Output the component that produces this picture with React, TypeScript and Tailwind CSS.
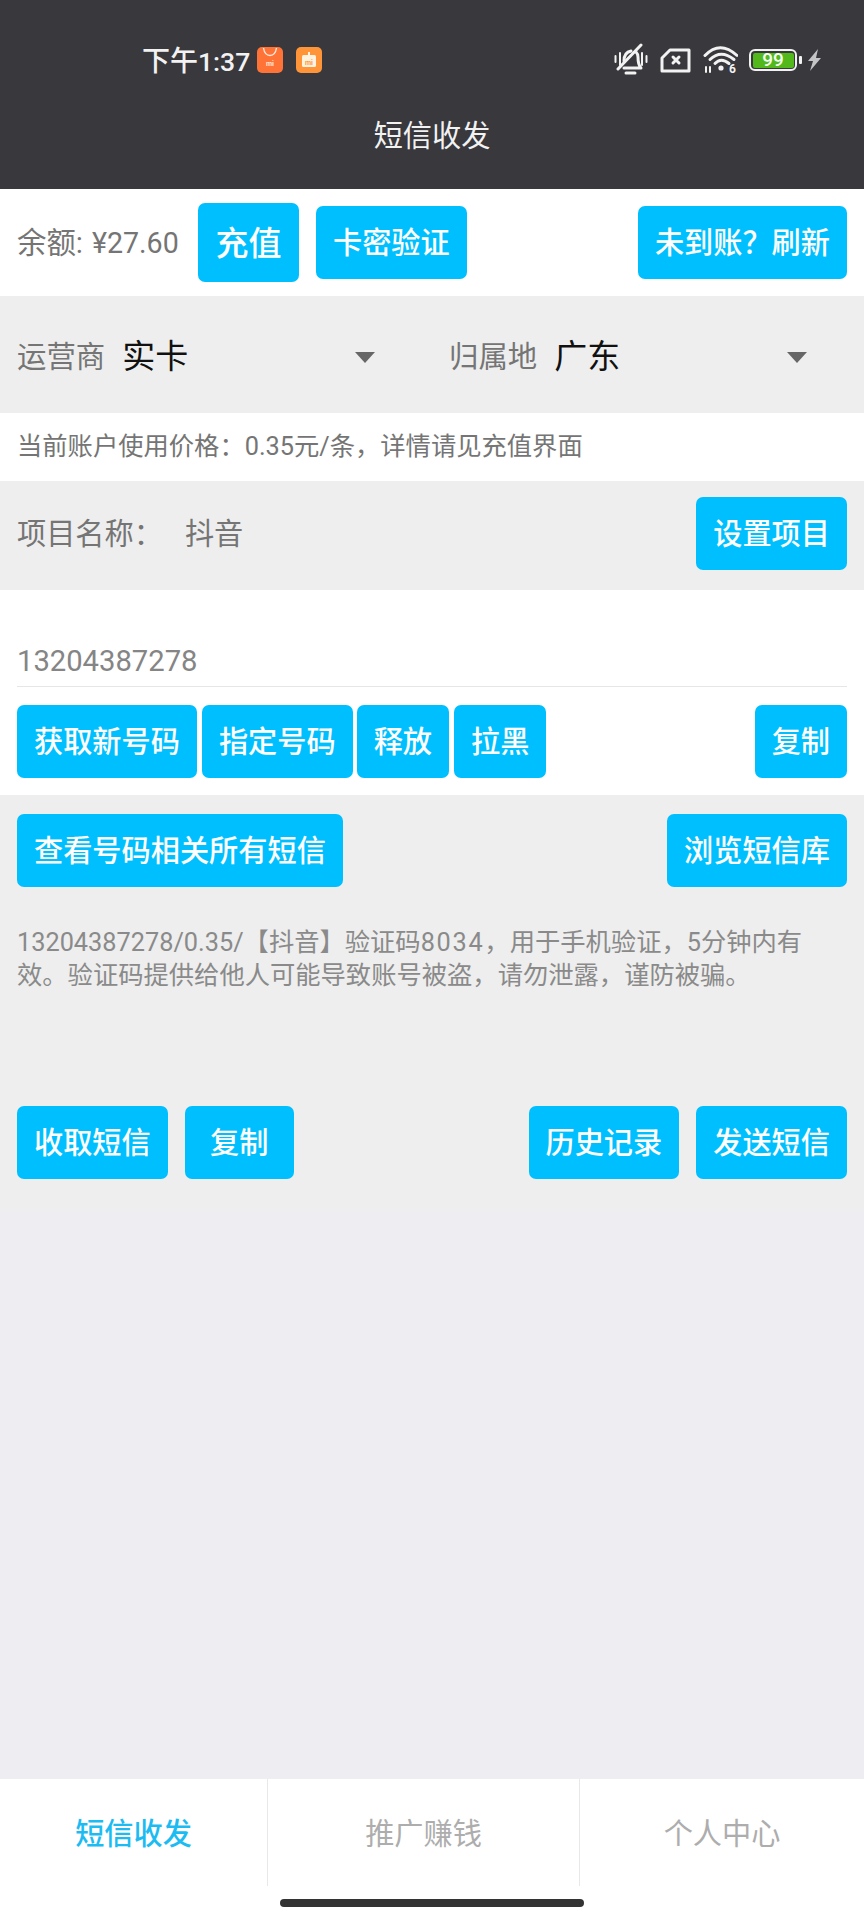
import React from 'react';

const FONT = "font-['Roboto','Noto_Sans_CJK_SC',sans-serif]";

const Btn: React.FC<{ label: string; className?: string }> = ({ label, className = '' }) => (
  <button className={`h-[73px] px-[17px] pt-[2px] rounded-[7px] bg-[#00bfff] text-white text-[29.2px] font-medium whitespace-nowrap flex items-center justify-center ${className}`}>
    {label}
  </button>
);

const StatusIcons = () => (
  <div className="flex items-center">
    {/* muted bell */}
    <svg width="34" height="34" viewBox="0 0 34 34" fill="none" stroke="#f2f2f2" strokeWidth="3" strokeLinecap="round" strokeLinejoin="round">
      <path d="M10 25h17c-3-3-3-7-3-11 0-2-1-4-2-5" />
      <path d="M10 18c0-5 2-9 7-10" />
      <path d="M12 30h9" />
      <path d="M4 26L27 2" />
      <path d="M1.5 13v6M6 10v12M28 10v12M32.5 13v6" strokeWidth="2" />
    </svg>
    {/* sim with x */}
    <svg className="ml-[12px]" width="31" height="25" viewBox="0 0 31 25" fill="none" stroke="#f2f2f2" strokeWidth="3" strokeLinejoin="round" strokeLinecap="round">
      <path d="M10 2h19v21H2V10z" />
      <path d="M13 9l6 6M19 9l-6 6" />
    </svg>
    {/* wifi */}
    <svg className="ml-[11px]" width="36" height="30" viewBox="0 0 36 30" fill="none" stroke="#f2f2f2" strokeWidth="3" strokeLinecap="round">
      <path d="M3 10.5Q18-5 35 10.5" />
      <path d="M8 14.5Q19 4 32 14.5" />
      <path d="M13 18.500Q19 12 27 18.500" />
      <circle cx="19" cy="23" r="2.6" fill="#f2f2f2" stroke="none" />
      <path d="M4 22v5M8 22v5" strokeWidth="2" />
      <text x="27" y="28" fontSize="12" fontWeight="700" fill="#f2f2f2" stroke="none">6</text>
    </svg>
    {/* battery */}
    <div className="ml-[11px] flex items-center">
      <div className="w-[48px] h-[22px] rounded-[6px] border-[2.5px] border-[#f2f2f2] p-[1.5px] flex">
        <div className="flex-1 rounded-[2px] bg-[#52b81c] text-[#f4fff0] text-[19px] leading-[14px] font-medium text-center">99</div>
      </div>
      <div className="ml-[2px] w-[3px] h-[8px] rounded-[1px] bg-[#f2f2f2]" />
    </div>
    {/* charging bolt */}
    <svg className="ml-[5px]" width="15" height="22" viewBox="0 0 15 22" fill="#c4c4c6">
      <path d="M11 0L1 12h5l-3 10 11-13H9z" />
    </svg>
  </div>
);

const MiStoreIcon = () => (
  <svg width="26" height="26" viewBox="0 0 26 26">
    <rect width="26" height="26" rx="5" fill="#ff7337" />
    <path d="M6.5 1c1 6 3.500 7.500 6.500 7.500S18.500 7 19.500 1" fill="none" stroke="#ffe8dc" strokeWidth="1.4" />
    <text x="13" y="19" fontSize="7" fontWeight="700" textAnchor="middle" fill="#ffe8dc">mi</text>
  </svg>
);

const MiCalendarIcon = () => (
  <svg width="26" height="26" viewBox="0 0 26 26">
    <rect width="26" height="26" rx="5" fill="#ff9538" />
    <rect x="6" y="8" width="14" height="12" rx="1.5" fill="#fff3df" />
    <path d="M12 5h2v4h-2z" fill="#fff3df" />
    <text x="13" y="17.500" fontSize="7" fontWeight="700" textAnchor="middle" fill="#ff9538">mi</text>
  </svg>
);

const Caret = () => (
  <svg width="20" height="11" viewBox="0 0 20 11" fill="#666666">
    <path d="M0 0h20L10 11z" />
  </svg>
);

const Selector: React.FC<{ label: string; value: string; className?: string }> = ({ label, value, className = '' }) => (
  <div className={`flex items-center ${className}`}>
    <span className="text-[29.4px] text-[#757575]">{label}</span>
    <span className="ml-[17px] text-[33px] text-[#111111]">{value}</span>
    <div className="ml-auto"><Caret /></div>
  </div>
);

const Tab: React.FC<{ label: string; active?: boolean; className?: string }> = ({ label, active, className = '' }) => (
  <div className={`h-full pt-[4px] flex items-center justify-center text-[29.2px] ${active ? 'text-[#1cbcf2] font-medium' : 'text-[#adadad]'} ${className}`}>
    {label}
  </div>
);

export default function App() {
  return (
    <div className={`w-[864px] h-[1920px] flex flex-col bg-[#eeeef2] overflow-hidden ${FONT}`}>
      {/* Status bar + title */}
      <header className="h-[189px] shrink-0 bg-[#38383d] text-white flex flex-col">
        <div className="h-[32px] mt-[44px] flex items-center pl-[142px] pr-[42px]">
          <span className="pt-[3px] text-[28px] font-medium text-[#f2f2f2] w-[115px] whitespace-nowrap">下午<span className="text-[26.5px]">1:37</span></span>
          <MiStoreIcon />
          <div className="ml-[13px]"><MiCalendarIcon /></div>
          <div className="ml-auto"><StatusIcons /></div>
        </div>
        <h1 className="mt-[40px] text-center text-[29.2px] leading-[40px] text-[#f2f2f2] font-normal">短信收发</h1>
      </header>

      {/* Balance row */}
      <div className="h-[107px] shrink-0 bg-white flex items-center px-[17px]">
        <span className="pt-[2px] text-[29.4px] text-[#757575] w-[181px] whitespace-nowrap">余额:<span className="ml-[9px] text-[28.6px]">¥27.60</span></span>
        <Btn label="充值" className="h-[79px] w-[101px] text-[33px] !px-0" />
        <Btn label="卡密验证" className="ml-[17px]" />
        <Btn label="未到账？刷新" className="ml-auto" />
      </div>

      {/* Carrier / region */}
      <div className="h-[117px] shrink-0 bg-[#eeeeee] flex items-center pl-[17px] pr-[57px] pt-[5px]">
        <Selector label="运营商" value="实卡" className="w-[358px]" />
        <Selector label="归属地" value="广东" className="ml-[74px] flex-1" />
      </div>

      {/* Price */}
      <div className="h-[68px] shrink-0 bg-white flex items-center px-[17px] text-[25.3px] text-[#757575]">
        当前账户使用价格：0.35元/条，详情请见充值界面
      </div>

      {/* Project */}
      <div className="h-[109px] shrink-0 bg-[#eeeeee] flex items-start pt-[16px] px-[17px]">
        <span className="mt-[16px] text-[29.2px] text-[#757575]">项目名称：</span>
        <span className="mt-[16px] ml-[22px] text-[29.2px] text-[#757575]">抖音</span>
        <Btn label="设置项目" className="ml-auto" />
      </div>

      {/* Number */}
      <div className="h-[205px] shrink-0 bg-white px-[17px] pt-[49px]">
        <div className="h-[48px] border-b border-[#e6e6e6] text-[29.2px] leading-[44px] text-[#858585]">13204387278</div>
        <div className="mt-[18px] flex">
          <Btn label="获取新号码" />
          <Btn label="指定号码" className="ml-[5px]" />
          <Btn label="释放" className="ml-[4px]" />
          <Btn label="拉黑" className="ml-[5px]" />
          <Btn label="复制" className="ml-auto" />
        </div>
      </div>

      {/* Messages */}
      <div className="h-[415px] shrink-0 bg-[#eeeeee] px-[17px] pt-[19px]">
        <div className="flex justify-between">
          <Btn label="查看号码相关所有短信" />
          <Btn label="浏览短信库" />
        </div>
        <p className="mt-[39px] h-[180px] pr-[15px] text-[25.3px] leading-[33px] text-[#8a8a8a]">
          13204387278/0.35/【抖音】验证码<span className="tracking-[1.7px]">8034</span>，用于手机验证，5分钟内有效。验证码提供给他人可能导致账号被盗，请勿泄露，谨防被骗。
        </p>
        <div className="flex">
          <Btn label="收取短信" />
          <Btn label="复制" className="ml-[17px] w-[109px]" />
          <Btn label="历史记录" className="ml-auto" />
          <Btn label="发送短信" className="ml-[17px]" />
        </div>
      </div>

      <div className="flex-1" />

      {/* Tab bar */}
      <nav className="h-[141px] shrink-0 bg-white flex flex-col">
        <div className="h-[107px] flex">
          <Tab label="短信收发" active className="w-[268px] border-r border-[#e8e8e8]" />
          <Tab label="推广赚钱" className="w-[312px] border-r border-[#e8e8e8]" />
          <Tab label="个人中心" className="flex-1" />
        </div>
        <div className="mt-[13px] mx-auto w-[304px] h-[8px] rounded-full bg-[#333333]" />
      </nav>
    </div>
  );
}
